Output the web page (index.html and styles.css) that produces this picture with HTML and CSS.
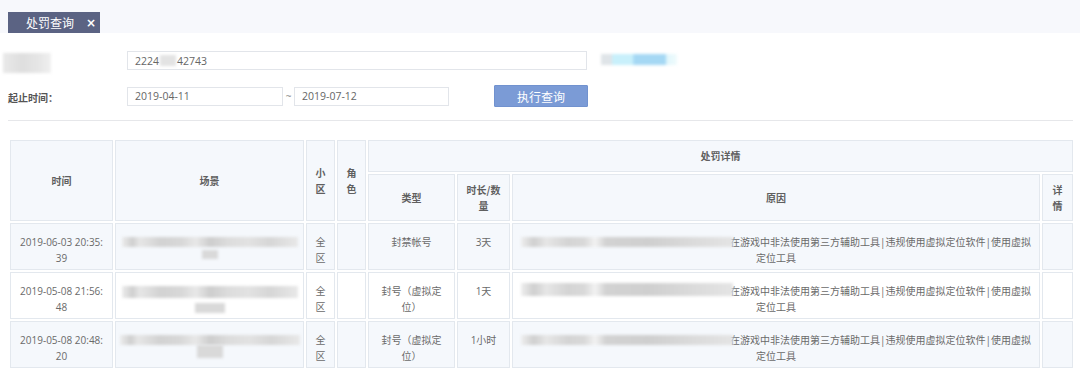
FILE: index.html
```html
<!DOCTYPE html>
<html lang="zh-CN">
<head>
<meta charset="utf-8">
<title>处罚查询</title>
<link rel="stylesheet" href="styles.css">
</head>
<body>
<div class="topbar">
  <div class="tab"><span class="tab-title">处罚查询</span><span class="tab-close">×</span></div>
</div>

<div class="form">
  <div class="form-row row-id">
    <div class="label"><span class="blur blur-label"></span></div>
    <div class="field field-id">2224<span class="blur blur-digits"></span>42743</div>
    <span class="blur blur-link"></span>
  </div>
  <div class="form-row row-date">
    <div class="label label-strong">起止时间：</div>
    <div class="field field-date">2019-04-11</div>
    <span class="tilde">~</span>
    <div class="field field-date2">2019-07-12</div>
    <button class="btn-query" type="button">执行查询</button>
  </div>
</div>

<div class="divider"></div>

<table class="grid">
  <colgroup>
    <col class="w-time"><col class="w-scene"><col class="w-zone"><col class="w-role">
    <col class="w-type"><col class="w-dur"><col class="w-reason"><col class="w-detail">
  </colgroup>
  <thead>
    <tr class="h1">
      <th rowspan="2">时间</th>
      <th rowspan="2">场景</th>
      <th rowspan="2">小区</th>
      <th rowspan="2">角色</th>
      <th colspan="4">处罚详情</th>
    </tr>
    <tr class="h2">
      <th>类型</th>
      <th>时长/数量</th>
      <th>原因</th>
      <th>详情</th>
    </tr>
  </thead>
  <tbody>
    <tr class="odd">
      <td>2019-06-03 20:35:39</td>
      <td><div class="scene"><span class="blur bar bar-a"></span><span class="blur chunk chunk-a"></span></div></td>
      <td>全区</td>
      <td></td>
      <td class="c-type">封禁帐号</td>
      <td>3天</td>
      <td class="c-reason"><span class="blur hidden-text ht-a"></span>在游戏中非法使用第三方辅助工具|违规使用虚拟定位软件|使用虚拟定位工具</td>
      <td></td>
    </tr>
    <tr>
      <td>2019-05-08 21:56:48</td>
      <td><div class="scene"><span class="blur bar bar-b"></span><span class="blur chunk chunk-b"></span></div></td>
      <td>全区</td>
      <td></td>
      <td class="c-type">封号（虚拟定位）</td>
      <td>1天</td>
      <td class="c-reason"><span class="blur hidden-text ht-b"></span>在游戏中非法使用第三方辅助工具|违规使用虚拟定位软件|使用虚拟定位工具</td>
      <td></td>
    </tr>
    <tr class="odd">
      <td>2019-05-08 20:48:20</td>
      <td><div class="scene"><span class="blur bar bar-c"></span><span class="blur chunk chunk-c"></span></div></td>
      <td>全区</td>
      <td></td>
      <td class="c-type">封号（虚拟定位）</td>
      <td>1小时</td>
      <td class="c-reason"><span class="blur hidden-text ht-c"></span>在游戏中非法使用第三方辅助工具|违规使用虚拟定位软件|使用虚拟定位工具</td>
      <td></td>
    </tr>
  </tbody>
</table>
</body>
</html>
```

FILE: styles.css
```css
* { box-sizing: border-box; }

html, body {
  margin: 0;
  padding: 0;
  background: #ffffff;
}

body {
  font-family: "Open Sans", "Noto Sans CJK SC", sans-serif;
  font-size: 10px;
  color: #666;
  overflow: hidden;
}

/* ---------- top tab bar ---------- */
.topbar {
  height: 33px;
  background: #f7f8fc;
  padding: 12px 0 0 8px;
}

.tab {
  width: 92px;
  height: 21px;
  background: #5b6383;
  color: #fff;
  display: flex;
  align-items: center;
  padding-left: 18px;
  font-family: "Noto Sans CJK SC", sans-serif;
  font-size: 12px;
}

.tab-close {
  margin-left: 12px;
  font-size: 12px;
  font-weight: bold;
  font-family: "DejaVu Sans", sans-serif;
}

/* ---------- form ---------- */
.form {
  padding: 18px 0 0 8px;
}

.form-row {
  display: flex;
  align-items: center;
}

.row-id { height: 19px; }

.row-date {
  height: 22px;
  margin-top: 15px;
}

.label {
  width: 119px;
  flex: none;
  font-family: "Noto Sans CJK SC", sans-serif;
}

.label-strong {
  font-weight: bold;
  color: #555;
  font-size: 10px;
  padding-top: 3px;
}

.field {
  height: 19px;
  border: 1px solid #e2e5ea;
  background: #fff;
  padding-left: 7px;
  display: flex;
  align-items: center;
  font-size: 10.5px;
  color: #666;
  flex: none;
}

.field-id { width: 460px; }
.field-date { width: 156px; }
.field-date2 { width: 155px; }

.tilde {
  width: 11px;
  text-align: center;
  color: #888;
  font-size: 10px;
}

.btn-query {
  margin-left: 45px;
  width: 94px;
  height: 22px;
  border: 1px solid #7192cf;
  background: #7b9bd6;
  color: #fff;
  font-family: "Noto Sans CJK SC", sans-serif;
  font-size: 12px;
  padding: 0;
  border-radius: 1px;
}

/* blurred (masked) content */
.blur {
  display: inline-block;
  filter: blur(1.6px);
  flex: none;
}

.blur-label {
  width: 48px;
  height: 20px;
  margin-left: -5px;
  margin-top: 8px;
  background: linear-gradient(90deg, #e9e9e9 0, #dedede 40%, #e6e6e6 75%, #f0f0f0 100%);
}

.blur-digits {
  width: 16px;
  height: 11px;
  background: #e3e3e3;
  margin: 0 1px;
}

.blur-link {
  width: 76px;
  height: 11px;
  margin-left: 14px;
  margin-top: -3px;
  background: linear-gradient(90deg, #dfe4e8 0, #dfe4e8 14%, #c8f0fb 15%, #c8f0fb 42%, #a5d8f4 43%, #a5d8f4 85%, #e0f6fb 86%, #f0fbfd 100%);
}

/* ---------- divider ---------- */
.divider {
  height: 1px;
  background: #e6e7ea;
  margin: 13px 7px 0 8px;
}

/* ---------- table ---------- */
.grid {
  margin: 17px 0 0 8px;
  width: 1067px;
  table-layout: fixed;
  border-collapse: separate;
  border-spacing: 2px;
  font-family: "Open Sans", "Noto Sans CJK SC", sans-serif;
}

.w-time { width: 103px; }
.w-scene { width: 189px; }
.w-zone { width: 29px; }
.w-role { width: 29px; }
.w-type { width: 87px; }
.w-dur { width: 53px; }
.w-reason { width: 528px; }
.w-detail { width: 31px; }

.grid th,
.grid td {
  border: 1px solid #e3e8ee;
  padding: 0 8px;
  text-align: center;
  line-height: 16px;
  word-break: break-all;
}

.grid th {
  background: #f5f8fc;
  font-weight: bold;
  color: #5f5f5f;
  vertical-align: middle;
  font-family: "Noto Sans CJK SC", sans-serif;
}

.h1 { height: 32px; }
.h2 { height: 47px; }

.grid tbody tr { height: 47px; }

.grid td {
  vertical-align: top;
  padding-top: 10px;
  padding-bottom: 3px;
  background: #fff;
  color: #6a6a6a;
}

.grid tr.odd td { background: #f5f8fc; }

.grid td.c-type { padding-left: 10px; padding-right: 10px; }

.scene {
  display: flex;
  flex-direction: column;
  align-items: center;
}

.bar {
  height: 10px;
  margin-top: 3px;
  background: linear-gradient(90deg, #ececec 0, #cfcfcf 6%, #e6e6e6 10%, #d2d2d2 22%, #d8d8d8 34%, #e8e8e8 42%, #cdcdcd 50%, #dcdcdc 60%, #e2e2e2 72%, #d6d6d6 84%, #e8e8e8 100%);
}

.bar-a { width: 176px; }
.bar-b { width: 176px; height: 12px; }
.bar-c { width: 180px; }

.chunk {
  background: #d9d9d9;
  margin-top: 3px;
}

.chunk-a { width: 16px; height: 9px; }
.chunk-b { width: 30px; height: 10px; margin-top: 5px; }
.chunk-c { width: 26px; height: 13px; margin-top: 0; }

.hidden-text {
  width: 212px;
  height: 10px;
  vertical-align: -1px;
  margin-right: -3px;
  background: linear-gradient(90deg, #eeeeee 0, #cfcfcf 6%, #e6e6e6 12%, #d4d4d4 22%, #d9d9d9 30%, #f2f2f2 35%, #d2d2d2 40%, #cfcfcf 60%, #dadada 80%, #e4e4e4 100%);
}

.ht-b { height: 13px; }
```
